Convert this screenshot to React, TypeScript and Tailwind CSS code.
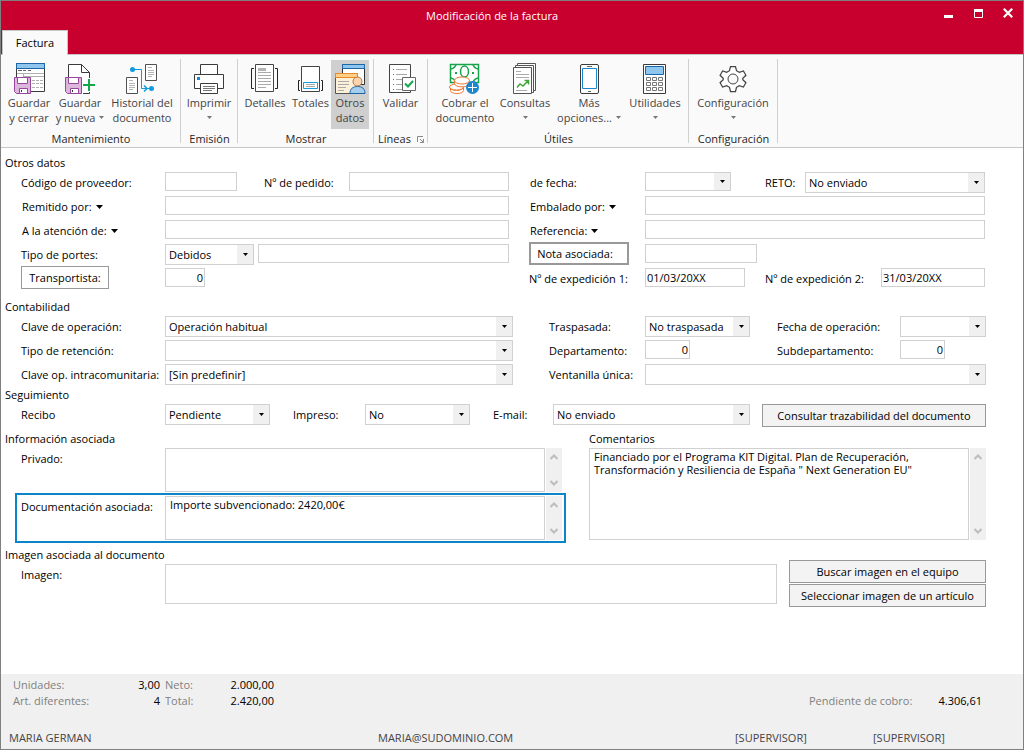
import type { ReactNode } from "react";
import { clsx } from "clsx";

const INPUT = "h-[19px] mt-[2px] px-px border border-[#d0d0d0] bg-white outline-none min-w-0 focus:border-[#0b84c8]";

function Caret({ className = "fill-black" }: { className?: string }) {
  return (
    <svg width="7" height="4" viewBox="0 0 7 4" className={clsx("inline-block shrink-0", className)} aria-hidden>
      <path d="M0 0h7L3.5 4z" />
    </svg>
  );
}

function Label({ id, children, className }: { id: string; children: ReactNode; className?: string }) {
  return (
    <label htmlFor={id} className={clsx("shrink-0 h-6 leading-[26px] whitespace-nowrap", className)}>
      {children}
    </label>
  );
}

// Etiqueta con menú desplegable
function MenuLabel({ children, className }: { children: ReactNode; className?: string }) {
  return (
    <button
      type="button"
      className={clsx("shrink-0 h-6 pt-[2px] pl-px text-left whitespace-nowrap flex items-center gap-1", className)}
    >
      {children}
      <Caret />
    </button>
  );
}

function Select({
  id,
  options = [""],
  className,
  height = "h-[21px]",
}: {
  id: string;
  options?: string[];
  className?: string;
  height?: string;
}) {
  return (
    <div className={clsx("relative mt-[2px] min-w-0", height, className)}>
      <select
        id={id}
        className="block w-full h-full appearance-none border border-[#d0d0d0] bg-white pl-[3px] pr-[18px] pt-[2px] outline-none focus:border-[#0b84c8]"
      >
        {options.map((o) => (
          <option key={o}>{o}</option>
        ))}
      </select>
      <span className="pointer-events-none absolute inset-y-px right-px w-4 bg-[#f0f0f0] flex items-center justify-center">
        <svg width="5" height="3" viewBox="0 0 5 3" aria-hidden>
          <path d="M0 0h5L2.5 3z" />
        </svg>
      </span>
    </div>
  );
}

function ScrollBar() {
  return (
    <div className="w-4 ml-px mt-[2px] bg-[#f0f0f0] flex flex-col items-center justify-between py-[6px]" aria-hidden>
      <svg width="8" height="6" viewBox="0 0 8 6" fill="none" stroke="#bdbdbd" strokeWidth="2">
        <path d="M0.5 5L4 1.5L7.5 5" />
      </svg>
      <svg width="8" height="6" viewBox="0 0 8 6" fill="none" stroke="#bdbdbd" strokeWidth="2">
        <path d="M0.5 1L4 4.5L7.5 1" />
      </svg>
    </div>
  );
}

function Memo({ id, value, rows, label }: { id: string; value?: string; rows: string; label?: string }) {
  return (
    <div className="flex flex-1 min-w-0">
      <textarea
        id={id}
        aria-label={label}
        defaultValue={value}
        className={clsx(
          "flex-1 min-w-0 mt-[2px] resize-none overflow-hidden border border-[#d0d0d0] bg-white px-1 py-px leading-[13px] outline-none",
          rows,
        )}
      />
      <ScrollBar />
    </div>
  );
}

function Heading({ children }: { children: ReactNode }) {
  return <h2 className="h-[14px] leading-[14px] pl-1 whitespace-nowrap">{children}</h2>;
}

function PushButton({ children, className }: { children: ReactNode; className?: string }) {
  return (
    <button
      type="button"
      className={clsx(
        "h-[23px] pt-[2px] shrink-0 border border-[#999] bg-[#f3f3f3] hover:bg-[#e6e6e6] whitespace-nowrap",
        className,
      )}
    >
      {children}
    </button>
  );
}

/* ---------- Iconos de la cinta ---------- */

function Icon({ children }: { children: ReactNode }) {
  return (
    <svg width="32" height="32" viewBox="0 0 32 32" fill="none" className="shrink-0" aria-hidden>
      {children}
    </svg>
  );
}

function Floppy() {
  return (
    <>
      <path d="M1.5 15.5h16v16h-14l-2-2z" fill="#ddb6dc" stroke="#96479c" />
      <path d="M4.5 15.5h10v6h-10z" fill="#fff" stroke="#96479c" />
      <path d="M6.5 26.5h8v5h-8z" fill="#fff" stroke="#96479c" />
      <path d="M8.5 28v2" stroke="#333" />
    </>
  );
}

function SaveCloseIcon() {
  return (
    <Icon>
      <path d="M3.5 1.5h28v28h-28z" fill="#fff" stroke="#3b3b3b" />
      <path d="M3.5 1.5h28v5h-28z" fill="#8fc6ee" stroke="#1c66a8" />
      <path d="M5 8.5h4M10 8.5h3M15 8.5h3" stroke="#666" />
      <path d="M4 11.5h27M10.5 11v4M11 14.5h20" stroke="#b0b0b0" />
      <path d="M19 18.5h3m1 0h3m1 0h3M19 21.5h3m1 0h3m1 0h3M19 25.5h3m1 0h3m1 0h3" stroke="#b0b0b0" />
      <Floppy />
    </Icon>
  );
}

function SaveNewIcon() {
  return (
    <Icon>
      <path d="M4.5 15V2.5h13l8 8V31.5h-21z" fill="#fff" />
      <path d="M4.5 15V2.500h13l8 8V16M25.5 30v1.500H19M17.5 2.500v8h8" stroke="#3b3b3b" />
      <Floppy />
      <path d="M19 23h12M25 17v12" stroke="#12a84c" strokeWidth="2" />
    </Icon>
  );
}

function HistoryIcon() {
  return (
    <Icon>
      <path d="M19.5 2.5h11v16h-11z" fill="#fff" stroke="#505050" />
      <path d="M22 5.5h4M22 8.5h6M22 10.5h6M22 12.5h6M22 14.5h4" stroke="#b5b5b5" />
      <path d="M.5 15.5h11v16H.5z" fill="#fff" stroke="#505050" />
      <path d="M3 18.5h4M3 21.5h6M3 23.5h6M3 25.5h6M3 27.5h4" stroke="#b5b5b5" />
      <path d="M6 7.5h9.5v19H25" stroke="#0f9be0" />
      <path d="M18 23.5l3 3-3 3" stroke="#0f9be0" strokeWidth="1.5" />
      <circle cx="6.5" cy="7.5" r="2.5" fill="#0f9be0" />
      <circle cx="25.5" cy="26.5" r="2.5" fill="#0f9be0" />
    </Icon>
  );
}

function PrinterIcon() {
  return (
    <Icon>
      <path d="M7.5 2.5h17v10h-17z" fill="#fff" stroke="#3b3b3b" />
      <path d="M1.5 12.5h29v14h-29z" fill="#fff" stroke="#3b3b3b" />
      <path d="M4 15h3v3H4z" fill="#1b87cf" />
      <path d="M7.5 21.5h17v10h-17z" fill="#fff" stroke="#3b3b3b" />
      <path d="M10 24.5h12M10 26.5h12M10 28.5h9" stroke="#777" />
    </Icon>
  );
}

function DetailsIcon() {
  return (
    <Icon>
      <path d="M6.5 2.5h18v27h-18z" fill="#fff" stroke="#444" />
      <path d="M9 6h8v3H9z" fill="#b5b5b5" />
      <path d="M9 10.5h13M9 13.5h13M9 16.5h13M9 19.5h13M9 22.5h13M9 25.5h8" stroke="#aaa" />
      <path d="M5 6.5H2.5v20H5M26 6.5h2.5v20H26" stroke="#222" />
    </Icon>
  );
}

function TotalsIcon() {
  return (
    <Icon>
      <path d="M6.5 4.5h18v25h-18z" fill="#fff" stroke="#444" />
      <path d="M5 18.5H3.5v10H5M26 18.5h1.5v10H26" stroke="#222" />
      <path d="M8.5 20.5h14v6h-14z" fill="#fff" stroke="#1b9add" />
      <path d="M11 22.5h9M11 24.5h9" stroke="#aaa" />
    </Icon>
  );
}

function OtherDataIcon() {
  return (
    <Icon>
      <path d="M8.5 2.5h22v20h-22z" fill="#fff" stroke="#333" />
      <path d="M8.5 2.5h22v4h-22z" fill="#8fc6ee" stroke="#1c66a8" />
      <path d="M1.5 11.5h22v20h-22z" fill="#fdf0d8" stroke="#555" />
      <path d="M1.5 11.5h22v4h-22z" fill="#ffcf86" stroke="#e38b2c" />
      <path d="M4 19.5h11M4 22.5h11M4 25.5h8M4 28.5h6" stroke="#aaa" />
      <path d="M16 31.5c0-5 3-7 7.500-7s7.500 2 7.500 7z" fill="#a5cdec" stroke="#1c66a8" />
      <circle cx="23.5" cy="19.5" r="4.5" fill="#fad4ae" stroke="#b3763e" />
    </Icon>
  );
}

function ValidateIcon() {
  return (
    <Icon>
      <path d="M4.5 2.5h21v28h-21z" fill="#fff" stroke="#444" />
      <path d="M8 7.5h1M8 17.5h1M8 27.5h1" stroke="#e03b3b" />
      <path d="M8 12.5h1M8 22.5h1" stroke="#23a455" />
      <path d="M11 7.5h11M11 12.5h11M11 17.5h6M11 22.5h6M11 27.5h6" stroke="#aaa" />
      <path d="M17.5 15.5h13v13h-13z" fill="#fff" stroke="#666" />
      <path d="M20 21.5l3 3 5-5.5" stroke="#12a84c" strokeWidth="2" />
    </Icon>
  );
}

function CashIcon() {
  return (
    <Icon>
      <path d="M1.5 2.5h28v18h-28z" fill="#fff" stroke="#17a34a" strokeWidth="1.5" />
      <path d="M2 7q4-1 5-4.5M29 7q-4-1-5-4.5M29 16q-4 1-5 4.5M2 16q3 .5 4 3" stroke="#17a34a" strokeWidth="1.5" />
      <ellipse cx="15.5" cy="9.5" rx="4" ry="5.5" stroke="#17a34a" strokeWidth="1.5" />
      <path d="M6 10h2v2H6zM23 10h2v2h-2z" fill="#17a34a" />
      <g fill="#fff" stroke="#ee7a35">
        <path d="M1.500 28.500c0 4 13 4 13 0v-3h-13z" />
        <path d="M.5 25c0 4.500 14 4.500 14 0" />
        <ellipse cx="7.5" cy="25" rx="7" ry="3" />
        <path d="M5.500 18.500v3c0 4.500 15 4.500 15 0v-3" />
        <ellipse cx="13" cy="18.500" rx="7.500" ry="3.500" />
      </g>
      <circle cx="23.5" cy="25.5" r="6.500" fill="#1b87cf" />
      <path d="M19 25.5h9M23.5 21v9" stroke="#fff" />
    </Icon>
  );
}

function QueriesIcon() {
  return (
    <Icon>
      <path d="M8.5 1.5h18v27h-18z" fill="#fff" stroke="#555" />
      <path d="M6.5 3.5h18v27h-18z" fill="#fff" stroke="#555" />
      <path d="M4.5 5.5h18v26h-18z" fill="#fff" stroke="#555" />
      <path d="M7 9.5h5M7 12.5h13M7 15.5h13M7 28.5h11" stroke="#aaa" />
      <path d="M8 25.5l3-3.5 3 2 5-5M15.5 18.5h4v4" stroke="#3fa535" strokeWidth="1.5" />
    </Icon>
  );
}

function PhoneIcon() {
  return (
    <Icon>
      <rect x="7.5" y="2.5" width="18" height="29" rx="1.5" fill="#fff" stroke="#3b3b3b" />
      <path d="M9.5 6.5h14v20h-14z" fill="#fff" stroke="#1b87cf" />
      <path d="M14 4.5h5M15 29.5h3" stroke="#666" />
    </Icon>
  );
}

function CalculatorIcon() {
  return (
    <Icon>
      <path d="M4.5 2.5h22v29h-22z" fill="#fff" stroke="#3b3b3b" />
      <path d="M6.5 4.5h18v8h-18z" fill="#8fc6ee" stroke="#1c66a8" />
      <g stroke="#777">
        <path d="M7.5 15.5h4v3h-4zM13.5 15.5h4v3h-4zM19.5 15.5h4v3h-4z" />
        <path d="M7.5 20.5h4v3h-4zM13.5 20.5h4v3h-4zM19.5 20.5h4v3h-4z" />
        <path d="M7.5 25.5h4v3h-4zM13.5 25.5h4v3h-4zM19.5 25.5h4v3h-4z" />
      </g>
    </Icon>
  );
}

function GearIcon() {
  return (
    <Icon>
      <path
        d="M13.5 4.500h5l1 4.200 2.800 1.600 4.100-1.300 2.500 4.300-3.100 2.900v1.600l3.100 2.900-2.500 4.300-4.100-1.300-2.800 1.600-1 4.200h-5l-1-4.200-2.800-1.600L5.600 25l-2.500-4.300 3.100-2.900v-1.600l-3.100-2.900L5.600 9l4.100 1.300 2.800-1.600z"
        fill="#fff"
        stroke="#444"
        strokeWidth="1.25"
      />
      <circle cx="16" cy="17" r="5" fill="#fafafa" stroke="#444" />
    </Icon>
  );
}

/* ---------- Cinta ---------- */

function RibbonButton({
  icon,
  lines,
  menu,
  active,
  className,
}: {
  icon: ReactNode;
  lines: string[];
  menu?: boolean;
  active?: boolean;
  className?: string;
}) {
  return (
    <button
      type="button"
      className={clsx(
        "shrink-0 h-[69px] pt-[2px] flex flex-col items-center text-[#444] leading-[15px] whitespace-nowrap",
        active ? "bg-[#cfcfcf]" : "hover:bg-[#e4e4e4]",
        className,
      )}
    >
      {icon}
      <span className="mt-px">{lines[0]}</span>
      <span className="h-[15px] flex items-center gap-1">
        {lines[1]}
        {menu && (
          <svg width="5" height="3" viewBox="0 0 5 3" fill="#777" aria-hidden>
            <path d="M0 0h5L2.5 3z" />
          </svg>
        )}
      </span>
    </button>
  );
}

function RibbonGroup({
  title,
  children,
  className,
  launcher,
}: {
  title: string;
  children: ReactNode;
  className?: string;
  launcher?: boolean;
}) {
  return (
    <section className="shrink-0 border-r border-[#d0d0d0] flex flex-col justify-between">
      <div className={clsx("flex pt-px", className)}>{children}</div>
      <h2 className="pl-px text-center text-[#262626] leading-4 flex justify-center items-center gap-[6px] whitespace-nowrap -mb-1">
        {title}
        {launcher && (
          <svg width="7" height="7" viewBox="0 0 7 7" fill="none" stroke="#888" aria-hidden>
            <path d="M.5 6V.5H6M3 3l3 3M6.5 3v3.5H3" />
          </svg>
        )}
      </h2>
    </section>
  );
}

function Ribbon() {
  return (
    <div className="bg-[#fafafa] border-b border-[#c6c6c6] h-[93px] pt-1 pb-1 flex overflow-hidden">
      <RibbonGroup title="Mantenimiento" className="pl-px">
        <RibbonButton className="w-[54px]" icon={<SaveCloseIcon />} lines={["Guardar", "y cerrar"]} />
        <RibbonButton className="w-12" icon={<SaveNewIcon />} lines={["Guardar", "y nueva"]} menu />
        <RibbonButton className="w-[76px]" icon={<HistoryIcon />} lines={["Historial del", "documento"]} />
      </RibbonGroup>
      <RibbonGroup title="Emisión">
        <RibbonButton className="w-14" icon={<PrinterIcon />} lines={["Imprimir"]} menu />
      </RibbonGroup>
      <RibbonGroup title="Mostrar" className="pl-[2px] pr-1">
        <RibbonButton className="w-[50px]" icon={<DetailsIcon />} lines={["Detalles"]} />
        <RibbonButton className="w-[41px]" icon={<TotalsIcon />} lines={["Totales"]} />
        <RibbonButton className="w-[38px]" icon={<OtherDataIcon />} lines={["Otros", "datos"]} active />
      </RibbonGroup>
      <RibbonGroup title="Líneas" launcher>
        <RibbonButton className="w-[53px]" icon={<ValidateIcon />} lines={["Validar"]} />
      </RibbonGroup>
      <RibbonGroup title="Útiles" className="pl-[2px] pr-[6px]">
        <RibbonButton className="w-[70px]" icon={<CashIcon />} lines={["Cobrar el", "documento"]} />
        <RibbonButton className="w-[50px]" icon={<QueriesIcon />} lines={["Consultas"]} menu />
        <RibbonButton className="w-[78px]" icon={<PhoneIcon />} lines={["Más", "opciones..."]} menu />
        <RibbonButton className="w-[54px]" icon={<CalculatorIcon />} lines={["Utilidades"]} menu />
      </RibbonGroup>
      <RibbonGroup title="Configuración">
        <RibbonButton className="w-[88px]" icon={<GearIcon />} lines={["Configuración"]} menu />
      </RibbonGroup>
    </div>
  );
}

function TitleBar() {
  return (
    <header className="bg-[#c8002d] border-b border-[#c6c6c6]">
      <div className="flex pl-[50px]">
        <h1 className="flex-1 text-center text-white leading-[29px]">Modificación de la factura</h1>
        <div className="w-[90px] pl-[10px] pt-[6px] flex gap-5 items-start">
          <button type="button" aria-label="Minimizar" className="w-[10px] h-3">
            <svg width="10" height="11" viewBox="0 0 10 11" fill="#fff">
              <path d="M1 7h9v3H1z" />
            </svg>
          </button>
          <button type="button" aria-label="Maximizar" className="w-[10px] h-3">
            <svg width="10" height="11" viewBox="0 0 10 11" fill="none" stroke="#fff">
              <path d="M1.5 1.5h8v8h-8z" />
              <path d="M1 2.5h9" strokeWidth="3" />
            </svg>
          </button>
          <button type="button" aria-label="Cerrar" className="w-[10px] h-3">
            <svg width="10" height="11" viewBox="0 0 10 11" stroke="#fff" strokeWidth="2.2">
              <path d="M.8 .8l8.400 8.400M9.200 .8L.8 9.200" />
            </svg>
          </button>
        </div>
      </div>
      <nav className="pl-px -mb-px flex">
        <button type="button" className="h-[25px] w-[66px] bg-[#fafafa] border border-b-0 border-[#c6c6c6] text-black">
          Factura
        </button>
      </nav>
    </header>
  );
}

/* ---------- Formulario ---------- */

function OtrosDatos() {
  return (
    <section>
      <Heading>Otros datos</Heading>
      <div className="grid grid-cols-[minmax(0,488fr)_minmax(0,456fr)] gap-x-5 pl-5 pr-[38px]">
        <div>
          <div className="flex h-6">
            <Label id="codigo" className="w-36">Código de proveedor:</Label>
            <input id="codigo" className={clsx(INPUT, "w-[72px]")} />
            <Label id="pedido" className="w-28 pl-[27px]">Nº de pedido:</Label>
            <input id="pedido" className={clsx(INPUT, "flex-1")} />
          </div>
          <div className="flex h-6">
            <MenuLabel className="w-36">Remitido por:</MenuLabel>
            <input aria-label="Remitido por" className={clsx(INPUT, "flex-1")} />
          </div>
          <div className="flex h-6">
            <MenuLabel className="w-36">A la atención de:</MenuLabel>
            <input aria-label="A la atención de" className={clsx(INPUT, "flex-1")} />
          </div>
          <div className="flex h-6">
            <Label id="portes" className="w-36">Tipo de portes:</Label>
            <Select id="portes" options={["Debidos", "Pagados"]} className="w-[89px] mr-1" />
            <input aria-label="Descripción de portes" className={clsx(INPUT, "flex-1")} />
          </div>
          <div className="flex h-6">
            <div className="w-36 shrink-0">
              <button type="button" className="w-[88px] h-[23px] pt-px border border-[#999] bg-white">
                Transportista:
              </button>
            </div>
            <input aria-label="Transportista" defaultValue="0" className={clsx(INPUT, "w-10 text-right")} />
          </div>
        </div>

        <div>
          <div className="flex h-6">
            <Label id="fecha" className="w-[116px] pl-px">de fecha:</Label>
            <Select id="fecha" className="w-[86px]" height="h-[19px]" />
            <Label id="reto" className="w-[74px] pl-[34px]">RETO:</Label>
            <Select id="reto" options={["No enviado", "Enviado"]} className="flex-1" />
          </div>
          <div className="flex h-6">
            <MenuLabel className="w-[116px]">Embalado por:</MenuLabel>
            <input aria-label="Embalado por" className={clsx(INPUT, "flex-1")} />
          </div>
          <div className="flex h-6">
            <MenuLabel className="w-[116px]">Referencia:</MenuLabel>
            <input aria-label="Referencia" className={clsx(INPUT, "flex-1")} />
          </div>
          <div className="flex h-6">
            <div className="w-[116px] shrink-0">
              <button type="button" className="w-[100px] h-[23px] pt-px pr-2 border-2 border-[#999] bg-white">
                Nota asociada:
              </button>
            </div>
            <input aria-label="Nota asociada" className={clsx(INPUT, "w-28")} />
          </div>
          <div className="flex h-6">
            <Label id="exp1" className="w-[116px]">Nº de expedición 1:</Label>
            <input id="exp1" defaultValue="01/03/20XX" className={clsx(INPUT, "w-[100px]")} />
            <Label id="exp2" className="w-[136px] pl-5">Nº de expedición 2:</Label>
            <input id="exp2" defaultValue="31/03/20XX" className={clsx(INPUT, "flex-1")} />
          </div>
        </div>
      </div>
    </section>
  );
}

function Contabilidad() {
  return (
    <section className="mt-[10px]">
      <Heading>Contabilidad</Heading>
      <div className="grid grid-cols-[minmax(0,492fr)_minmax(0,437fr)] gap-x-9 pl-5 pr-[37px]">
        <div className="grid grid-cols-[144px_1fr] auto-rows-[24px]">
          <Label id="clave">Clave de operación:</Label>
          <Select id="clave" options={["Operación habitual"]} />
          <Label id="retencion">Tipo de retención:</Label>
          <Select id="retencion" />
          <Label id="intra">Clave op. intracomunitaria:</Label>
          <Select id="intra" options={["[Sin predefinir]"]} />
        </div>
        <div className="grid grid-cols-[96px_105px_150px_1fr] auto-rows-[24px]">
          <Label id="traspasada">Traspasada:</Label>
          <Select id="traspasada" options={["No traspasada", "Traspasada"]} />
          <Label id="fechaop" className="pl-[27px]">Fecha de operación:</Label>
          <Select id="fechaop" />
          <Label id="depto">Departamento:</Label>
          <input id="depto" defaultValue="0" className={clsx(INPUT, "w-[45px] text-right")} />
          <Label id="subdepto" className="pl-[27px]">Subdepartamento:</Label>
          <input id="subdepto" defaultValue="0" className={clsx(INPUT, "w-[45px] text-right")} />
          <Label id="ventanilla">Ventanilla única:</Label>
          <Select id="ventanilla" className="col-span-3" />
        </div>
      </div>
    </section>
  );
}

function Seguimiento() {
  return (
    <section className="mt-[2px]">
      <Heading>Seguimiento</Heading>
      <div className="flex h-6 pl-5 pr-[37px]">
        <Label id="recibo" className="w-36">Recibo</Label>
        <Select id="recibo" options={["Pendiente", "Cobrado"]} className="w-[105px]" />
        <Label id="impreso" className="w-[95px] pl-[23px]">Impreso:</Label>
        <Select id="impreso" options={["No", "Sí"]} className="w-[105px]" />
        <Label id="email" className="w-[83px] pl-[23px]">E-mail:</Label>
        <Select id="email" options={["No enviado", "Enviado"]} className="flex-1" />
        <PushButton className="w-56 ml-3 mt-[2px]">Consultar trazabilidad del documento</PushButton>
      </div>
    </section>
  );
}

function Informacion() {
  return (
    <section className="mt-[6px] grid grid-cols-[minmax(0,561fr)_minmax(0,397fr)] gap-x-[27px] pr-[37px]">
      <div>
        <Heading>Información asociada</Heading>
        <div className="flex h-12 pb-[2px] pl-5">
          <Label id="privado" className="w-36">Privado:</Label>
          <Memo id="privado" rows="h-11" />
        </div>
        <div className="relative flex h-12 pb-[2px] ml-5">
          <Label id="documentacion" className="w-36">Documentación asociada:</Label>
          <Memo id="documentacion" rows="h-11" value="Importe subvencionado: 2420,00€" />
          <div className="pointer-events-none absolute -left-[6px] -right-1 -inset-y-px border-2 border-[#0b84c8]" />
        </div>
      </div>
      <div className="flex flex-col">
        <h2 className="h-[14px] leading-[14px]">Comentarios</h2>
        <div className="flex pb-[2px]">
          <Memo
            id="comentarios"
            label="Comentarios"
            rows="h-[92px]"
            value={
              'Financiado por el Programa KIT Digital. Plan de Recuperación,\nTransformación y Resiliencia de España " Next Generation EU"'
            }
          />
        </div>
      </div>
    </section>
  );
}

function Imagen() {
  return (
    <section className="mt-[6px] flex pr-[37px]">
      <div className="flex-1">
        <Heading>Imagen asociada al documento</Heading>
        <div className="flex pl-5">
          <Label id="imagen" className="w-36">Imagen:</Label>
          <input id="imagen" className="flex-1 min-w-0 mt-[2px] h-10 border border-[#d0d0d0] bg-white px-1 outline-none" />
        </div>
      </div>
      <div className="w-[197px] ml-3 pt-3 flex flex-col gap-px">
        <PushButton>Buscar imagen en el equipo</PushButton>
        <PushButton>Seleccionar imagen de un artículo</PushButton>
      </div>
    </section>
  );
}

function Footer() {
  return (
    <footer className="bg-[#f0f0f0] pt-[3px] pb-[3px] leading-4">
      <div className="flex justify-between items-end pl-3 pr-[41px]">
        <dl className="grid grid-cols-[95px_52px_50px_64px] text-right">
          <dt className="text-left text-[#808080]">Unidades:</dt>
          <dd>3,00</dd>
          <dt className="text-left text-[#808080] pl-[5px]">Neto:</dt>
          <dd>2.000,00</dd>
          <dt className="text-left text-[#808080]">Art. diferentes:</dt>
          <dd>4</dd>
          <dt className="text-left text-[#808080] pl-[5px]">Total:</dt>
          <dd>2.420,00</dd>
        </dl>
        <dl className="grid grid-cols-[113px_60px]">
          <dt className="text-[#808080]">Pendiente de cobro:</dt>
          <dd className="text-right">4.306,61</dd>
        </dl>
      </div>
      <div className="mt-[21px] grid grid-cols-[369fr_357fr_138fr_150fr] pl-2 text-[#444]">
        <span>MARIA GERMAN</span>
        <span>MARIA@SUDOMINIO.COM</span>
        <span>[SUPERVISOR]</span>
        <span>[SUPERVISOR]</span>
      </div>
    </footer>
  );
}

export default function App() {
  return (
    <div className="min-h-screen flex flex-col border border-[#7f7f7f] bg-white text-black text-[11px] font-['Open_Sans','Noto_Sans',sans-serif]">
      <TitleBar />
      <Ribbon />
      <main className="flex-1 pt-2">
        <OtrosDatos />
        <Contabilidad />
        <Seguimiento />
        <Informacion />
        <Imagen />
      </main>
      <Footer />
    </div>
  );
}
